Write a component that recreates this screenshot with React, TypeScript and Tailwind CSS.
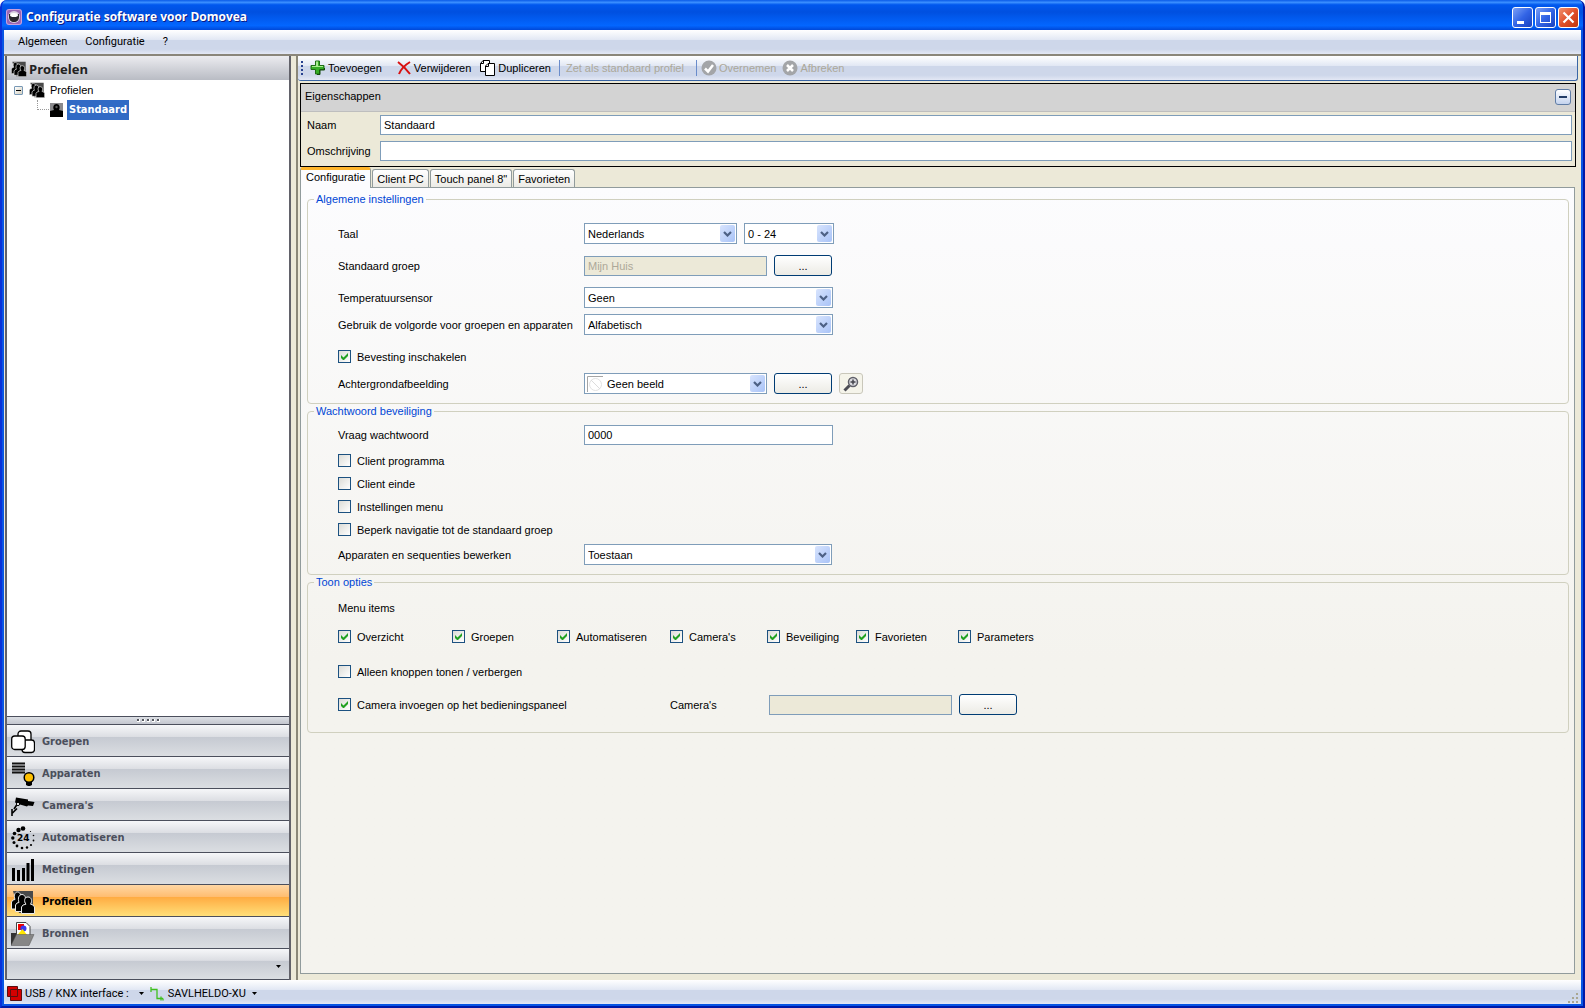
import { useState, type ReactNode } from "react";
import { clsx } from "clsx";

const NAV_ITEMS = [
  { id: "groepen", label: "Groepen", icon: <GroupsIcon /> },
  { id: "apparaten", label: "Apparaten", icon: <DevicesIcon /> },
  { id: "cameras", label: "Camera's", icon: <CameraIcon /> },
  { id: "automatiseren", label: "Automatiseren", icon: <ClockIcon /> },
  { id: "metingen", label: "Metingen", icon: <BarsIcon /> },
  { id: "profielen", label: "Profielen", icon: <PeopleIcon className="size-6" /> },
  { id: "bronnen", label: "Bronnen", icon: <SourcesIcon /> },
];

const TABS = ["Configuratie", "Client PC", 'Touch panel 8"', "Favorieten"];

export default function App() {
  const [activeNav, setActiveNav] = useState("profielen");
  const [activeTab, setActiveTab] = useState("Configuratie");

  return (
    <div className="flex min-h-screen flex-col overflow-hidden rounded-t-[7px] border-x-2 border-b-2 border-[#0019a8] border-l-[#0831d9] bg-[#0855e4] font-['Liberation_Sans',Arial,sans-serif] text-[11px] leading-[14px] text-black">
      <TitleBar />
      <div className="flex flex-1 flex-col border-x-2 border-b-2 border-[#0855e4] bg-[#ece9d8]">
        <MenuBar />
        <div className="flex flex-1 border-t-2 border-[#8a867a]">
          <Sidebar active={activeNav} onSelect={setActiveNav} />
          <main className="ml-[5px] flex flex-1 flex-col border-l-2 border-[#8a8778] pr-[3px] pb-1.5">
            <Toolbar />
            <Properties />
            <div role="tablist" className="ml-0.5 flex h-5 items-end gap-px">
              {TABS.map((tab) => (
                <button
                  key={tab}
                  type="button"
                  role="tab"
                  aria-selected={tab === activeTab}
                  onClick={() => setActiveTab(tab)}
                  className={clsx(
                    "rounded-t-[3px] border border-b-0 border-[#919b9c]",
                    tab === activeTab
                      ? "relative -mb-px h-[21px] border-t-3 border-t-[#ffb52b] bg-[#fcfcfe] px-[5px] pb-1"
                      : "h-[18px] bg-linear-to-b from-white to-[#ecebe6] px-1",
                  )}
                >
                  {tab}
                </button>
              ))}
            </div>
            <Configuration />
          </main>
        </div>
        <StatusBar />
      </div>
    </div>
  );
}

function TitleBar() {
  return (
    <header className="flex h-[30px] items-center bg-[linear-gradient(#0a5be8,#3a8fff_8%,#0058ee_16%,#0050e0_40%,#0366ff_85%,#0048d8)] pt-1 pr-1 pl-1">
      <svg viewBox="0 0 16 16" className="size-4" aria-hidden="true">
        <rect width="16" height="16" rx="3" fill="#c9a0dc" />
        <rect x="1" y="1" width="14" height="14" rx="2" fill="#9a66b4" />
        <circle cx="8" cy="8" r="6" fill="#d9cfe0" />
        <path d="M3 5h10v3c0 3-2 5-5 5S3 11 3 8z" fill="#2a2730" />
        <ellipse cx="8" cy="6" rx="4" ry="2" fill="#fff" />
      </svg>
      <h1 className="ml-1 flex-1 font-['Open_Sans','Noto_Sans',sans-serif] text-[12px] font-bold text-white [text-shadow:1px_1px_0_#0a1883]">
        Configuratie software voor Domovea
      </h1>
      <div className="flex gap-0.5">
        <WindowButton label="Minimaliseren">
          <path d="M5 14h7v3H5z" fill="#fff" />
        </WindowButton>
        <WindowButton label="Maximaliseren">
          <path d="M5 5h11v11H5zM6 8v7h9V8z" fill="#fff" fillRule="evenodd" />
        </WindowButton>
        <WindowButton label="Sluiten" close>
          <path d="m5.500 5.500 10 10m0-10-10 10" stroke="#fff" strokeWidth="2.200" />
        </WindowButton>
      </div>
    </header>
  );
}

function WindowButton({ label, close, children }: { label: string; close?: boolean; children: ReactNode }) {
  return (
    <button
      type="button"
      aria-label={label}
      className={clsx(
        "size-[21px] rounded-[3px] border border-white bg-linear-to-br",
        close ? "from-[#f0906c] via-[#e1502a] to-[#c23508]" : "from-[#7c9ff5] via-[#3264e6] to-[#1941c0]",
      )}
    >
      <svg viewBox="1 1 19 19" className="size-full">
        {children}
      </svg>
    </button>
  );
}

function MenuBar() {
  return (
    <nav className="flex h-6 items-center gap-[18px] bg-[linear-gradient(#fff,#e2e8f4_40%,#ced7ea_42%,#ced7ea_80%,#e3e8f5)] px-3.5 font-[Roboto,sans-serif]">
      <button type="button">Algemeen</button>
      <button type="button">Configuratie</button>
      <button type="button">?</button>
    </nav>
  );
}

function Sidebar({ active, onSelect }: { active: string; onSelect: (id: string) => void }) {
  return (
    <aside className="ml-px flex w-[286px] flex-col border-x-2 border-[#62626a] bg-white font-['DejaVu_Sans_Condensed','DejaVu_Sans',sans-serif]">
      <h2 className="flex h-6 items-center gap-0.5 bg-linear-to-b from-[#ececf0] to-[#b9bcc4] pt-0.5 pl-1 font-['Open_Sans','Noto_Sans',sans-serif] text-[13px] font-bold text-[#222]">
        <PeopleIcon className="size-4" />
        Profielen
      </h2>
      <ul className="flex-1 pl-[7px] font-['Liberation_Sans',Arial,sans-serif]">
        <li>
          <div className="flex h-5 items-center">
            <button
              type="button"
              aria-label="Inklappen"
              className="flex size-[9px] items-center justify-center rounded-[1px] border border-[#7898b5] bg-linear-to-br from-white to-[#d5d0c0]"
            >
              <span className="h-px w-[5px] bg-black" />
            </button>
            <PeopleIcon className="ml-1.5 size-4" />
            <span className="ml-[5px]">Profielen</span>
          </div>
          <ul className="pl-[23px]">
            <li className="flex h-5 items-center">
              <span className="h-2.5 w-3 self-start border-b border-l border-dotted border-[#999]" />
              <PersonIcon />
              <button
                type="button"
                className="ml-1 h-5 bg-[#316ac5] px-0.5 font-['DejaVu_Sans_Condensed','DejaVu_Sans',sans-serif] font-bold text-white"
              >
                Standaard
              </button>
            </li>
          </ul>
        </li>
      </ul>
      <div className="flex h-2 items-center justify-center gap-0.5 border-t border-[#4b4f5c] bg-linear-to-b from-[#dcdfe4] to-[#c3c6cf]">
        {[0, 1, 2, 3, 4].map((n) => (
          <span key={n} className="size-[3px] border-r border-b border-white bg-[#55585f]" />
        ))}
      </div>
      <nav className="border-b border-[#4b4f5c]">
        {NAV_ITEMS.map((item) => (
          <button
            key={item.id}
            type="button"
            onClick={() => onSelect(item.id)}
            className={clsx(
              "flex h-8 w-full items-center border-t border-[#4b4f5c] pt-0.5 pl-1 font-bold",
              item.id === active
                ? "bg-[linear-gradient(#ffd7a4,#ffbd70_38%,#ffac42_40%,#ffdf79)] text-black"
                : "bg-[linear-gradient(#f6f7f9,#dcdee3_38%,#c6cad2_40%,#dbdee2)] text-[#4b4f5c]",
            )}
          >
            <span className="flex w-[31px]">{item.icon}</span>
            {item.label}
          </button>
        ))}
        <div className="flex h-[31px] items-center justify-end border-t border-[#4b4f5c] bg-[linear-gradient(#f6f7f9,#dcdee3_38%,#c6cad2_40%,#dbdee2)] pt-1 pr-2">
          <button type="button" aria-label="Knoppen configureren">
            <Caret />
          </button>
        </div>
      </nav>
    </aside>
  );
}

function Toolbar() {
  return (
    <div className="flex h-[25px] items-center rounded-b-[3px] border-r border-b border-[#3a66a5] bg-[linear-gradient(#fff,#e2e8f4_40%,#ced7ea_42%,#ced7ea_80%,#e3e8f5)] pl-[3px]">
      <svg viewBox="0 0 3 14" className="h-3.5 w-[3px]" aria-hidden="true">
        <path d="M0 0h2v2H0zM0 4h2v2H0zM0 8h2v2H0zM0 12h2v2H0z" fill="#27418f" />
      </svg>
      <button type="button" className="ml-1.5 flex items-center gap-0.5">
        <svg viewBox="0 0 16 16" className="size-4" aria-hidden="true">
          <path
            d="M5.500 1h4v4.500H14v4H9.500V14h-4V9.500H1v-4h4.500z"
            fill="#35ad25"
            stroke="#1d6b14"
            strokeLinejoin="round"
          />
          <path d="M6 1.500h2v4.500H13v1H2V6h4z" fill="#a7ec8e" />
          <path d="M7 14.500h3V10h4.500V8" fill="none" stroke="#124a0c" />
        </svg>
        Toevoegen
      </button>
      <button type="button" className="ml-3.5 flex items-center gap-0.5">
        <svg viewBox="0 0 16 16" className="size-4" aria-hidden="true">
          <path d="M2 2c4 3 9 8 12 12M14 2C9 5 5 9 3 14" fill="none" stroke="#d81010" strokeWidth="2" />
        </svg>
        Verwijderen
      </button>
      <button type="button" className="ml-2 flex items-center gap-0.5">
        <svg viewBox="0 0 17 16" className="h-4 w-[17px]" fill="#fff" stroke="#000" aria-hidden="true">
          <path d="M4 .5h6.500v11h-9v-8z" />
          <path d="M4.500.5v3h-3" fill="none" />
          <path d="M9 3.500h6.500v12h-9V6z" />
          <path d="M9.500 3.500v3h-3" fill="none" />
        </svg>
        Dupliceren
      </button>
      <span className="ml-2 h-4 w-px bg-[#6a8ccb]" />
      <button type="button" disabled className="ml-1.5 text-[#aca899]">
        Zet als standaard profiel
      </button>
      <span className="ml-3 h-4 w-px bg-[#6a8ccb]" />
      <button type="button" disabled className="ml-1 flex items-center gap-0.5 text-[#aca899]">
        <svg viewBox="0 0 16 16" className="size-4" aria-hidden="true">
          <circle cx="8" cy="8" r="7.500" fill="#a3a5a8" />
          <path d="m4 8.500 3 3L12 5" fill="none" stroke="#fff" strokeWidth="2.500" />
        </svg>
        Overnemen
      </button>
      <button type="button" disabled className="ml-1.5 flex items-center gap-0.5 text-[#aca899]">
        <svg viewBox="0 0 16 16" className="size-4" aria-hidden="true">
          <circle cx="8" cy="8" r="7.500" fill="#a3a5a8" />
          <path d="m5 5 6 6m0-6-6 6" stroke="#fff" strokeWidth="2.500" />
        </svg>
        Afbreken
      </button>
    </div>
  );
}

function Properties() {
  return (
    <section className="mx-0.5 mt-0.5 border border-black pb-[5px]">
      <div className="flex h-7 items-center border-b border-[#bebebe] bg-[#d3d3d3] pr-1 pl-1">
        <h2 className="flex-1 pb-1">Eigenschappen</h2>
        <button
          type="button"
          aria-label="Eigenschappen inklappen"
          className="mb-0.5 flex size-4 items-center justify-center rounded-[3px] border border-[#5f7ca5] bg-linear-to-b from-white to-[#c4d3ee]"
        >
          <span className="h-0.5 w-2 bg-[#223c66]" />
        </button>
      </div>
      <div className="mt-[3px] flex items-center pr-[3px] pl-1.5">
        <label htmlFor="naam" className="w-[73px]">
          Naam
        </label>
        <input id="naam" defaultValue="Standaard" className="h-5 flex-1 border border-[#7f9db9] bg-white px-[3px]" />
      </div>
      <div className="mt-1.5 flex items-center pr-[3px] pl-1.5">
        <label htmlFor="omschrijving" className="w-[73px]">
          Omschrijving
        </label>
        <input id="omschrijving" className="h-5 flex-1 border border-[#7f9db9] bg-white px-[3px]" />
      </div>
    </section>
  );
}

function Configuration() {
  return (
    <form className="mr-[3px] ml-0.5 flex-1 border border-[#919b9c] bg-linear-to-b from-[#fcfcfe] to-[#f4f3ee] to-60% pt-1 pr-[5px] pb-4 pl-1.5">
      <Group title="Algemene instellingen">
        <Row label="Taal" htmlFor="taal" className="mt-[17px]">
          <Select id="taal" options={["Nederlands"]} className="w-[153px]" />
          <Select label="Uurnotatie" options={["0 - 24"]} className="w-[90px]" />
        </Row>
        <Row label="Standaard groep" htmlFor="groep" className="mt-[11px]">
          <input
            id="groep"
            disabled
            defaultValue="Mijn Huis"
            className="h-5 w-[183px] border border-[#7f9db9] bg-[#ece9d8] px-[3px] text-[#aca899]"
          />
          <BrowseButton label="Groep kiezen" />
        </Row>
        <Row label="Temperatuursensor" htmlFor="sensor" className="mt-[11px]">
          <Select id="sensor" options={["Geen"]} className="w-[249px]" />
        </Row>
        <Row label="Gebruik de volgorde voor groepen en apparaten" htmlFor="volgorde" className="mt-1.5">
          <Select id="volgorde" options={["Alfabetisch"]} className="w-[249px]" />
        </Row>
        <div className="mt-[15px] flex">
          <Checkbox label="Bevesting inschakelen" checked />
        </div>
        <Row label="Achtergrondafbeelding" htmlFor="achtergrond" className="mt-2.5 pb-[9px]">
          <Select id="achtergrond" options={["Geen beeld"]} className="w-[183px]" image />
          <BrowseButton label="Afbeelding kiezen" />
          <button
            type="button"
            aria-label="Voorbeeld"
            className="flex h-[21px] w-6 items-center justify-center rounded-[3px] border border-[#c9c7ba] bg-[#f5f4ea]"
          >
            <svg viewBox="0 0 16 16" className="size-4" fill="none" aria-hidden="true">
              <path d="m1.500 14.500 5-5" stroke="#4d4d55" strokeWidth="3" />
              <circle cx="10" cy="6" r="4.500" fill="#dcdce0" stroke="#5f5f68" strokeWidth="1.500" />
              <path d="M7.500 6h5M10 3.500v5" stroke="#44444c" strokeWidth="1.500" />
            </svg>
          </button>
        </Row>
      </Group>

      <Group title="Wachtwoord beveiliging">
        <Row label="Vraag wachtwoord" htmlFor="wachtwoord" className="mt-[7px]">
          <input
            id="wachtwoord"
            defaultValue="0000"
            className="h-5 w-[249px] border border-[#7f9db9] bg-white px-[3px]"
          />
        </Row>
        <div className="mt-[9px] flex flex-col gap-2.5">
          <Checkbox label="Client programma" />
          <Checkbox label="Client einde" />
          <Checkbox label="Instellingen menu" />
          <Checkbox label="Beperk navigatie tot de standaard groep" />
        </div>
        <Row label="Apparaten en sequenties bewerken" htmlFor="bewerken" className="mt-2 pb-[9px]">
          <Select id="bewerken" options={["Toestaan"]} className="w-[248px]" />
        </Row>
      </Group>

      <Group title="Toon opties">
        <p className="mt-3">Menu items</p>
        <div className="mt-[15px] flex">
          <Checkbox label="Overzicht" checked className="w-[114px]" />
          <Checkbox label="Groepen" checked className="w-[105px]" />
          <Checkbox label="Automatiseren" checked className="w-[113px]" />
          <Checkbox label="Camera's" checked className="w-[97px]" />
          <Checkbox label="Beveiliging" checked className="w-[89px]" />
          <Checkbox label="Favorieten" checked className="w-[102px]" />
          <Checkbox label="Parameters" checked />
        </div>
        <div className="mt-[22px] flex">
          <Checkbox label="Alleen knoppen tonen / verbergen" />
        </div>
        <div className="mt-4 flex items-center pb-[17px]">
          <Checkbox label="Camera invoegen op het bedieningspaneel" checked className="w-[332px]" />
          <label htmlFor="camera" className="w-[99px]">
            Camera's
          </label>
          <input id="camera" disabled className="mr-[7px] h-5 w-[183px] border border-[#7f9db9] bg-[#ece9d8] px-[3px]" />
          <BrowseButton label="Camera kiezen" />
        </div>
      </Group>
    </form>
  );
}

function Group({ title, children }: { title: string; children: ReactNode }) {
  return (
    <fieldset className="rounded-[4px] border border-[#d0d0bf] pl-[30px]">
      <legend className="-ml-6 px-0.5 text-[#0046d5]">{title}</legend>
      {children}
    </fieldset>
  );
}

function Row({
  label,
  htmlFor,
  className,
  children,
}: {
  label: string;
  htmlFor: string;
  className?: string;
  children: ReactNode;
}) {
  return (
    <div className={clsx("flex items-center", className)}>
      <label htmlFor={htmlFor} className="w-[246px]">
        {label}
      </label>
      <div className="flex items-center gap-[7px]">{children}</div>
    </div>
  );
}

function Select({
  id,
  label,
  options,
  className,
  image,
}: {
  id?: string;
  label?: string;
  options: string[];
  className: string;
  image?: boolean;
}) {
  return (
    <div className={clsx("relative", className)}>
      <select
        id={id}
        aria-label={label}
        className={clsx(
          "block h-[21px] w-full appearance-none border border-[#7f9db9] bg-white pr-5",
          image ? "pl-[22px]" : "pl-[3px]",
        )}
      >
        {options.map((o) => (
          <option key={o}>{o}</option>
        ))}
      </select>
      {image ? (
        <svg viewBox="0 0 16 16" className="absolute top-[3px] left-[3px] size-4" fill="none" aria-hidden="true">
          <path d="M.5 16V.5H16" stroke="#a5a5a5" />
          <circle cx="8.500" cy="8.500" r="6" stroke="#e2e2e2" />
          <path d="m4 4 9 9" stroke="#dcdcdc" />
        </svg>
      ) : null}
      <span className="pointer-events-none absolute inset-y-0.5 right-0.5 flex w-[15px] items-center justify-center rounded-[2px] bg-linear-to-br from-[#d8e4fd] to-[#a9c3f7]">
        <svg viewBox="0 0 9 6" className="h-1.5 w-[9px]" aria-hidden="true">
          <path d="m1 1 3.500 3.500L8 1" fill="none" stroke="#4d6185" strokeWidth="2.200" />
        </svg>
      </span>
    </div>
  );
}

function Checkbox({ label, checked, className }: { label: string; checked?: boolean; className?: string }) {
  return (
    <label className={clsx("flex h-[13px] items-center gap-1.5", className)}>
      <span className="relative flex">
        <input
          type="checkbox"
          defaultChecked={checked}
          className="peer size-[13px] appearance-none border border-[#1c5180] bg-linear-to-br from-[#dcdcd7] to-white"
        />
        <svg
          viewBox="0 0 13 13"
          className="pointer-events-none absolute inset-0 hidden size-[13px] peer-checked:block"
          aria-hidden="true"
        >
          <path d="M3 5v3l2 2h1l4-4V3L5.500 7.500z" fill="#21a121" />
        </svg>
      </span>
      {label}
    </label>
  );
}

function BrowseButton({ label }: { label: string }) {
  return (
    <button
      type="button"
      aria-label={label}
      className="h-[21px] w-[58px] rounded-[3px] border border-[#003c74] bg-linear-to-b from-white to-[#ecebe5]"
    >
      ...
    </button>
  );
}

function StatusBar() {
  return (
    <footer className="flex h-6 items-center bg-[linear-gradient(#fff,#e2e8f4_40%,#ced7ea_42%,#ced7ea_80%,#e3e8f5)] pt-[3px] pr-0.5 pl-[3px] font-[Roboto,sans-serif]">
      <svg viewBox="0 0 15 15" className="size-[15px]" aria-hidden="true">
        <path d="M.5.500h10v10H.5zM3.500 3.500h11v11h-11z" fill="#d40000" stroke="#5a0f0f" />
      </svg>
      <button type="button" className="ml-[3px] flex items-center gap-2.5">
        USB / KNX interface :
        <Caret />
      </button>
      <svg viewBox="0 0 14 14" className="ml-1.5 size-3.5" fill="none" stroke="#3fbf1f" aria-hidden="true">
        <path d="M1 0v5M1 2.500h6v9h6M11 9.500v4M13 11.500v2" strokeWidth="1.300" />
      </svg>
      <button type="button" className="ml-1 flex items-center gap-1.5">
        SAVLHELDO-XU
        <Caret />
      </button>
      <svg viewBox="0 0 12 12" className="ml-auto size-3 self-end" aria-hidden="true">
        <path d="M9 1h2v2H9zM5 5h2v2H5zM9 5h2v2H9zM1 9h2v2H1zM5 9h2v2H5zM9 9h2v2H9z" fill="#a9a692" />
      </svg>
    </footer>
  );
}

function Caret() {
  return (
    <svg viewBox="0 0 5 3" className="h-[3px] w-[5px]" aria-hidden="true">
      <path d="M0 0h5L2.500 3z" fill="#000" />
    </svg>
  );
}

function PersonIcon() {
  return (
    <svg viewBox="0 0 14 14" className="size-3.5" aria-hidden="true">
      <rect x="1" width="13" height="13" fill="#8a8a8d" />
      <path d="M1 14V8l4-1C3.500 4.500 4.500 1 7.500 1S11.500 4.500 10 7l4 1v6z" fill="#000" />
      <circle cx="7.500" cy="4" r="1.200" fill="#555" />
    </svg>
  );
}

function PeopleIcon({ className }: { className: string }) {
  return (
    <svg viewBox="0 0 24 24" className={className} aria-hidden="true">
      <path d="M2 1h20v22H8z" fill="#4a4a4a" />
      <g fill="#000" stroke="#e8e8e8">
        <path d="M.5 19v-7l1.500-2 2-.5C2.500 5 4 2 6.500 2s4 3 2.500 7l3 3v7z" />
        <path d="M4.500 21.500V15l1.500-2 2-.5C6.500 8 8 4.500 11 4.500s4.500 3.500 3 8l3 2v7z" />
        <path d="M10.500 23.500V17l1.500-2 3-.8C12.500 11 13.500 7 17 7s4.500 4 2.500 7.200l2.500.8 1.500 2v6.500z" />
      </g>
    </svg>
  );
}

function GroupsIcon() {
  return (
    <svg viewBox="0 0 24 24" className="size-6" fill="#fff" stroke="#000" strokeWidth="1.300" aria-hidden="true">
      <rect x="7" y="1" width="13" height="13" rx="3" />
      <rect x="11" y="10" width="12.500" height="12.500" rx="3" />
      <rect x=".7" y="6" width="13.500" height="13.500" rx="3" />
    </svg>
  );
}

function DevicesIcon() {
  return (
    <svg viewBox="0 0 24 24" className="size-6" aria-hidden="true">
      <path d="M1 1.500h13M1 4.500h13M1 7.500h13M1 10.500h13" stroke="#111" strokeWidth="2" />
      <path d="M15 19h6v4l-2 1h-2l-2-1z" fill="#000" />
      <circle cx="18" cy="15.500" r="4.800" fill="#fdbf00" stroke="#000" strokeWidth="1.500" />
    </svg>
  );
}

function CameraIcon() {
  return (
    <svg viewBox="0 0 24 24" className="size-6" aria-hidden="true">
      <path d="m5 3.500 12 2v1.500l6.500 1L22 12l-5-.500-1 1L9 10.500l-5-2z" fill="#000" />
      <path d="M6 10.500 3 15M1 15v7M1 19.500l5-5" stroke="#000" strokeWidth="1.600" />
      <circle cx="7" cy="10" r="1.600" fill="#fff" stroke="#000" />
    </svg>
  );
}

function ClockIcon() {
  return (
    <svg viewBox="0 0 24 24" className="size-6" aria-hidden="true">
      <circle cx="12" cy="2.500" r="2.300" />
      <circle cx="7.500" cy="4" r="2.200" />
      <circle cx="3.500" cy="7.500" r="1.800" />
      <circle cx="1.800" cy="12" r="1.700" />
      <circle cx="3" cy="16.500" r="1.500" />
      <circle cx="6" cy="20" r="1.400" />
      <circle cx="11" cy="22" r="1.300" />
      <circle cx="16" cy="21.500" r="1.200" />
      <circle cx="20" cy="19" r="1.100" />
      <circle cx="22.500" cy="14.500" r=".9" />
      <circle cx="22.500" cy="9.500" r=".8" />
      <circle cx="19.500" cy="5.500" r=".6" />
      <text x="6" y="15" fontSize="9" fontWeight="bold" fontFamily="DejaVu Sans">
        24
      </text>
    </svg>
  );
}

function BarsIcon() {
  return (
    <svg viewBox="0 0 24 24" className="size-6" aria-hidden="true">
      <path d="M1 10h3v13H1zM6 12h3v11H6zM11 10h3v13h-3zM15.500 5h3v18h-3zM20 1h3v22h-3z" />
    </svg>
  );
}

function SourcesIcon() {
  return (
    <svg viewBox="0 0 24 24" className="size-6" aria-hidden="true">
      <path d="M0 11h6v12H0z" fill="#333" />
      <path d="M5.500.5H15l4 4V17H5.500z" fill="#fff" stroke="#444" />
      <path d="M7 2h6v6H7z" fill="#f00000" />
      <circle cx="12.500" cy="6.500" r="3" fill="#3a3af0" />
      <path d="M6 13.500 11.500 7l5 6.500z" fill="#ffe600" />
      <path d="M5.500 12.500H23L18 23.500H0z" fill="#868686" stroke="#555" strokeWidth=".5" />
    </svg>
  );
}
